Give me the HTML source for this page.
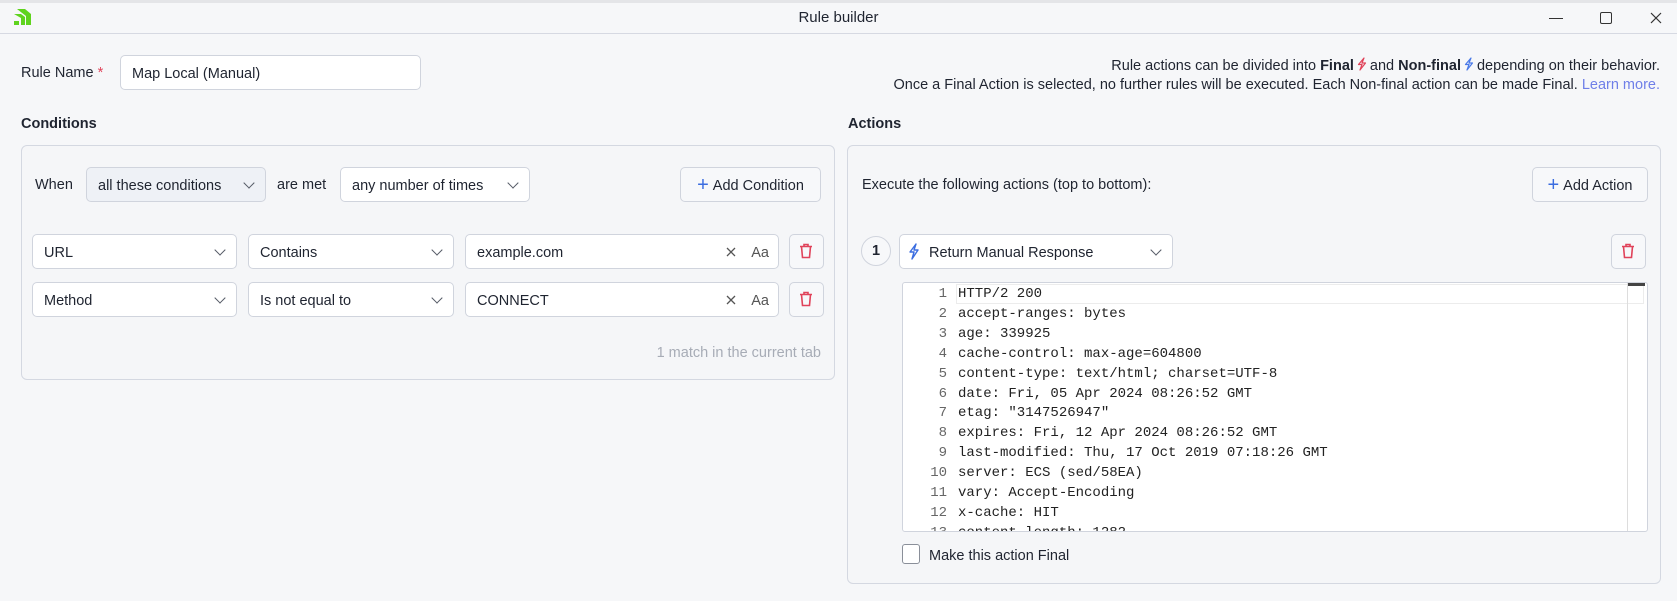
<!DOCTYPE html>
<html><head><meta charset="utf-8"><style>
*{box-sizing:border-box;margin:0;padding:0}
body{width:1677px;height:601px;background:#f6f7f9;font-family:"Liberation Sans",sans-serif;color:#1f2430;font-size:14.5px;position:relative;overflow:hidden}
.a{position:absolute}
.tb{left:0;top:0;width:1677px;height:34px;border-bottom:1px solid #d6d9e2;border-top:3px solid #e4e5e8;background:#f6f7f9}
.box{border:1px solid #d4d8e1;border-radius:6px;background:#f5f6f8}
.inp{background:#fff;border:1px solid #d0d4dd;border-radius:5px;height:35px;line-height:36px;padding-left:11px;white-space:nowrap}
.chev{position:absolute;right:12px;top:11px;width:8px;height:8px;border-right:1.3px solid #555b66;border-bottom:1.3px solid #555b66;transform:rotate(45deg)}
.btn{background:#f7f8fa;border:1px solid #d0d4dd;border-radius:5px;height:35px;line-height:34px;text-align:center;white-space:nowrap}
.plus{color:#3b6de0;font-size:20px;vertical-align:-1px;margin-right:4px}
.tr{width:35px;height:35px;background:#f7f8fa;border:1px solid #d0d4dd;border-radius:5px}
.h{font-weight:bold}
.code{font-family:"Liberation Mono",monospace;font-size:14px;white-space:pre}
</style></head><body>
<div class="a tb"></div>
<svg class="a" style="left:11px;top:7px" width="24" height="22" viewBox="0 0 24 22"><path d="M6 2 L14 2 L20 7 L20 18 L15 18 L15 9 Z" fill="#5fd31e"/><path d="M3 7 L10 7 L14 10 L14 18 L10 18 L10 11 Z" fill="#5fd31e"/><path d="M3 14 L8 14 L8 18 L3 18 Z" fill="#5fd31e"/></svg>
<div class="a" style="left:0;width:1677px;top:9px;text-align:center;font-size:15px">Rule builder</div>
<div class="a" style="left:1549px;top:18px;width:14px;height:1px;background:#333"></div>
<div class="a" style="left:1600px;top:12px;width:12px;height:12px;border:1.2px solid #333;border-radius:2px"></div>
<svg class="a" style="left:1650px;top:12px" width="12" height="12" viewBox="0 0 12 12"><path d="M1 1L11 11M11 1L1 11" stroke="#333" stroke-width="1.2"/></svg>

<div class="a" style="left:21px;top:65px">Rule Name <span style="color:#e0435a">*</span></div>
<div class="a inp" style="left:120px;top:55px;width:301px">Map Local (Manual)</div>
<div class="a" style="right:17px;top:57px;text-align:right;line-height:19px">Rule actions can be divided into <b>Final</b><svg width="10" height="14" viewBox="0 0 10 14" style="vertical-align:-1px;margin:0 3px"><path d="M7 1L1.5 7.5H5L3 13L8.5 6H5Z" fill="none" stroke="#e0435a" stroke-width="1.2" stroke-linejoin="round"/></svg>and <b>Non-final</b><svg width="10" height="14" viewBox="0 0 10 14" style="vertical-align:-1px;margin:0 3px"><path d="M7 1L1.5 7.5H5L3 13L8.5 6H5Z" fill="none" stroke="#4a7ae8" stroke-width="1.2" stroke-linejoin="round"/></svg>depending on their behavior.<br>Once a Final Action is selected, no further rules will be executed. Each Non-final action can be made Final. <span style="color:#6f7fe8">Learn more.</span></div>

<div class="a h" style="left:21px;top:116px">Conditions</div>
<div class="a h" style="left:848px;top:116px">Actions</div>

<div class="a box" style="left:21px;top:145px;width:814px;height:235px"></div>
<div class="a" style="left:35px;top:177px">When</div>
<div class="a inp" style="left:86px;top:167px;width:180px;background:#eef1f6">all these conditions<span class="chev"></span></div>
<div class="a" style="left:277px;top:177px">are met</div>
<div class="a inp" style="left:340px;top:167px;width:190px">any number of times<span class="chev"></span></div>
<div class="a btn" style="left:680px;top:167px;width:141px"><span class="plus">+</span>Add Condition</div>

<div class="a inp" style="left:32px;top:234px;width:205px">URL<span class="chev"></span></div>
<div class="a inp" style="left:248px;top:234px;width:206px">Contains<span class="chev"></span></div>
<div class="a inp" style="left:465px;top:234px;width:314px">example.com<svg class="a" style="right:42px;top:12px" width="10" height="10" viewBox="0 0 10 10"><path d="M1 1L9 9M9 1L1 9" stroke="#555" stroke-width="1.3"/></svg><span class="a" style="right:9px;top:0;color:#555">Aa</span></div>
<div class="a tr" style="left:789px;top:234px"></div>
<div class="a inp" style="left:32px;top:282px;width:205px">Method<span class="chev"></span></div>
<div class="a inp" style="left:248px;top:282px;width:206px">Is not equal to<span class="chev"></span></div>
<div class="a inp" style="left:465px;top:282px;width:314px">CONNECT<svg class="a" style="right:42px;top:12px" width="10" height="10" viewBox="0 0 10 10"><path d="M1 1L9 9M9 1L1 9" stroke="#555" stroke-width="1.3"/></svg><span class="a" style="right:9px;top:0;color:#555">Aa</span></div>
<div class="a tr" style="left:789px;top:282px"></div>
<svg class="a" style="left:799px;top:243px" width="14" height="16" viewBox="0 0 14 16"><path d="M1 3.5H13M5 3.5V1.5H9V3.5M2.5 3.5L3.5 14.5H10.5L11.5 3.5" fill="none" stroke="#e0435a" stroke-width="1.6"/></svg>
<svg class="a" style="left:799px;top:291px" width="14" height="16" viewBox="0 0 14 16"><path d="M1 3.5H13M5 3.5V1.5H9V3.5M2.5 3.5L3.5 14.5H10.5L11.5 3.5" fill="none" stroke="#e0435a" stroke-width="1.6"/></svg>
<div class="a" style="right:856px;top:345px;color:#a7acb6">1 match in the current tab</div>

<div class="a box" style="left:847px;top:145px;width:814px;height:439px"></div>
<div class="a" style="left:862px;top:177px">Execute the following actions (top to bottom):</div>
<div class="a btn" style="left:1532px;top:167px;width:116px"><span class="plus">+</span>Add Action</div>
<div class="a" style="left:861px;top:236px;width:30px;height:30px;border:1px solid #d0d4dd;border-radius:50%;text-align:center;line-height:29px;font-weight:bold;background:#f7f8fa">1</div>
<div class="a inp" style="left:899px;top:234px;width:274px;padding-left:29px">Return Manual Response<span class="chev"></span></div>
<svg class="a" style="left:908px;top:243px" width="12" height="17" viewBox="0 0 12 17"><path d="M8 1L2 9H6L4 16L10 7H6Z" fill="none" stroke="#3b6de0" stroke-width="1.4" stroke-linejoin="round"/></svg>
<div class="a tr" style="left:1611px;top:234px"></div>
<svg class="a" style="left:1621px;top:243px" width="14" height="16" viewBox="0 0 14 16"><path d="M1 3.5H13M5 3.5V1.5H9V3.5M2.5 3.5L3.5 14.5H10.5L11.5 3.5" fill="none" stroke="#e0435a" stroke-width="1.6"/></svg>

<div class="a" style="left:902px;top:282px;width:746px;height:250px;background:#fff;border:1px solid #d0d4dd;border-radius:3px;overflow:hidden">
<div class="a" style="left:53px;top:1px;width:688px;height:20px;border:1px solid #ececec"></div>
<div class="a" style="left:724px;top:0;width:1px;height:250px;background:#ddd"></div>
<div class="a" style="left:725px;top:0;width:17px;height:3px;background:#444"></div>
<div class="a code" style="left:0;top:2px;width:44px;line-height:19.9px;text-align:right;color:#666">1
2
3
4
5
6
7
8
9
10
11
12
13</div>
<div class="a code" style="left:55px;top:2px;line-height:19.9px;color:#222">HTTP/2 200
accept-ranges: bytes
age: 339925
cache-control: max-age=604800
content-type: text/html; charset=UTF-8
date: Fri, 05 Apr 2024 08:26:52 GMT
etag: "3147526947"
expires: Fri, 12 Apr 2024 08:26:52 GMT
last-modified: Thu, 17 Oct 2019 07:18:26 GMT
server: ECS (sed/58EA)
vary: Accept-Encoding
x-cache: HIT
content-length: 1282</div>
</div>
<div class="a" style="left:902px;top:544px;width:18px;height:20px;border:1px solid #8a8f99;border-radius:3px;background:#fff"></div>
<div class="a" style="left:929px;top:548px">Make this action Final</div>
</body></html>
